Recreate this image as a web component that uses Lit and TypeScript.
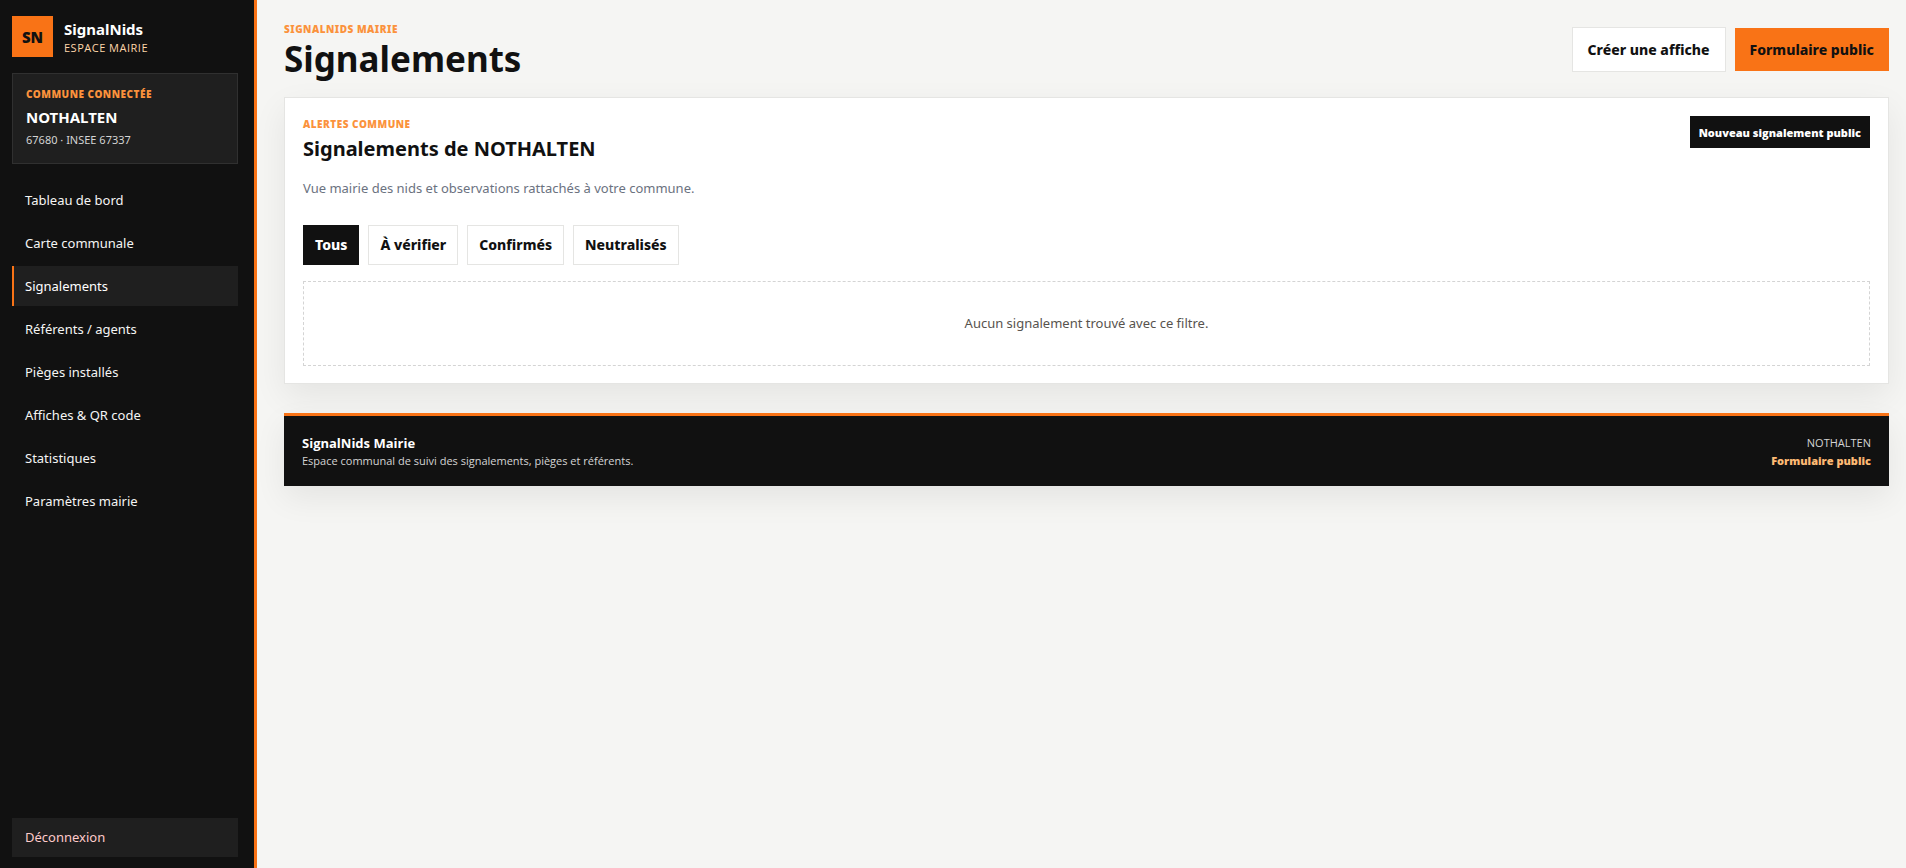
import { LitElement, html, css } from "lit";
import { customElement, state } from "lit/decorators.js";
import { classMap } from "lit/directives/class-map.js";

const NAV = [
  "Tableau de bord",
  "Carte communale",
  "Signalements",
  "Référents / agents",
  "Pièges installés",
  "Affiches & QR code",
  "Statistiques",
  "Paramètres mairie",
];

const FILTERS = ["Tous", "À vérifier", "Confirmés", "Neutralisés"];

@customElement("app-sidebar")
export class AppSidebar extends LitElement {
  static styles = css`
    :host {
      display: flex;
      flex-direction: column;
      box-sizing: border-box;
      padding: 16px 16px 11px 12px;
      background: #111111;
      border-right: 3px solid #f97316;
      color: #ffffff;
    }
    .brand {
      display: flex;
      align-items: center;
      gap: 11px;
      margin-bottom: 16px;
      color: inherit;
      text-decoration: none;
    }
    .logo {
      display: grid;
      place-items: center;
      width: 41px;
      height: 41px;
      background: #f97316;
      color: #111111;
      font-size: 15px;
      font-weight: 900;
    }
    .name {
      display: block;
      padding-top: 2px;
      font-size: 15px;
      line-height: 20px;
      font-weight: 700;
    }
    .space {
      display: block;
      font-size: 11px;
      line-height: 18px;
      letter-spacing: 0.5px;
      text-transform: uppercase;
      color: #fed7aa;
      font-family: "Open Sans", sans-serif;
    }
    .commune {
      padding: 13px;
      margin-bottom: 16px;
      background: #1f1f1f;
      border: 1px solid #303030;
    }
    .label {
      font-size: 10px;
      line-height: 15px;
      font-weight: 900;
      letter-spacing: 0.5px;
      text-transform: uppercase;
      color: #fb923c;
    }
    .town {
      margin-top: 4px;
      font-size: 15px;
      line-height: 22px;
      font-weight: 700;
    }
    .codes {
      margin-top: 2px;
      font-size: 11px;
      line-height: 20px;
      color: #d4d4d4;
    }
    nav {
      display: flex;
      flex-direction: column;
      gap: 3px;
    }
    .item {
      padding: 0 11px;
      border-left: 2px solid transparent;
      font-size: 13px;
      line-height: 40px;
      color: #f5f5f4;
      text-decoration: none;
    }
    .item.active {
      background: #1f1f1f;
      border-left-color: #f97316;
      color: #ffffff;
    }
    .logout {
      margin-top: auto;
      padding: 0 13px;
      border: 0;
      background: #1f1f1f;
      color: #fecaca;
      font: inherit;
      font-size: 13px;
      line-height: 39px;
      text-align: left;
      cursor: pointer;
    }
  `;

  render() {
    return html`
      <a class="brand" href="#">
        <span class="logo">SN</span>
        <span>
          <span class="name">SignalNids</span>
          <span class="space">Espace mairie</span>
        </span>
      </a>
      <section class="commune">
        <div class="label">Commune connectée</div>
        <div class="town">NOTHALTEN</div>
        <div class="codes">67680 · INSEE 67337</div>
      </section>
      <nav>
        ${NAV.map(
          (n) =>
            html`<a href="#" class=${classMap({ item: true, active: n === "Signalements" })}>${n}</a>`
        )}
      </nav>
      <button class="logout" type="button">Déconnexion</button>
    `;
  }
}

@customElement("app-root")
export class AppRoot extends LitElement {
  @state() filter = "Tous";

  static styles = css`
    :host {
      display: grid;
      grid-template-columns: 257px minmax(0, 1fr);
      min-height: 100vh;
      background: #f5f5f3;
      color: #111111;
      font-family: "Noto Sans", "Open Sans", sans-serif;
      font-size: 13px;
    }
    main {
      padding: 21px 17px 24px 27px;
    }
    header {
      display: flex;
      justify-content: space-between;
      align-items: flex-start;
      margin-bottom: 16px;
    }
    .eyebrow {
      margin: 0;
      font-size: 10px;
      line-height: 16px;
      font-weight: 900;
      letter-spacing: 0.5px;
      text-transform: uppercase;
      color: #fb923c;
    }
    h1 {
      margin: 0;
      font-size: 35px;
      line-height: 44px;
      font-weight: 700;
    }
    .actions {
      display: flex;
      align-items: center;
      gap: 9px;
      padding-top: 6px;
    }
    .btn {
      padding: 0 15px;
      font-size: 14px;
      line-height: 43px;
      font-weight: 800;
      color: #111111;
      text-decoration: none;
      white-space: nowrap;
    }
    .primary {
      background: #f97316;
    }
    .outline {
      background: #ffffff;
      border: 1px solid #e5e5e3;
    }
    .card {
      padding: 18px 18px 17px;
      background: #ffffff;
      border: 1px solid #e5e5e3;
      box-shadow: 0 12px 32px rgba(17, 17, 17, 0.07);
    }
    .top {
      display: flex;
      justify-content: space-between;
      align-items: flex-start;
    }
    h2 {
      margin: 0 0 11px;
      font-size: 20px;
      line-height: 34px;
      font-weight: 700;
    }
    .intro {
      margin: 0;
      line-height: 22px;
      color: #6b7280;
    }
    .small {
      padding: 2px 9px 0;
      background: #111111;
      color: #ffffff;
      font-family: "Open Sans", sans-serif;
      font-size: 11px;
      line-height: 30px;
      font-weight: 800;
      text-decoration: none;
      white-space: nowrap;
    }
    .filters {
      display: flex;
      flex-wrap: wrap;
      gap: 9px;
      margin: 26px 0 16px;
    }
    .filter {
      padding: 0 11px;
      border: 1px solid #e5e5e3;
      background: #ffffff;
      color: #111111;
      font: inherit;
      font-size: 14px;
      font-weight: 800;
      line-height: 38px;
      cursor: pointer;
    }
    .filter.active {
      background: #111111;
      border-color: #111111;
      color: #ffffff;
    }
    .empty {
      padding: 31px 16px;
      border: 1px dashed #d4d4d4;
      color: #57534e;
      line-height: 21px;
      text-align: center;
    }
    footer {
      display: flex;
      justify-content: space-between;
      align-items: center;
      margin-top: 29px;
      padding: 18px 18px 16px;
      border-top: 3px solid #f97316;
      background: #111111;
      color: #d4d4d4;
      font-family: "Open Sans", sans-serif;
      font-size: 11px;
      line-height: 18px;
      box-shadow: 0 12px 32px rgba(17, 17, 17, 0.07);
    }
    .signature {
      font-size: 13px;
      color: #ffffff;
      display: block;
    }
    .right {
      display: flex;
      flex-direction: column;
      align-items: flex-end;
    }
    .public {
      color: #fdba74;
      font-weight: 800;
      text-decoration: none;
    }
  `;

  render() {
    return html`
      <app-sidebar></app-sidebar>
      <main>
        <header>
          <div>
            <p class="eyebrow">SignalNids Mairie</p>
            <h1>Signalements</h1>
          </div>
          <div class="actions">
            <a class="btn outline" href="#">Créer une affiche</a>
            <a class="btn primary" href="#">Formulaire public</a>
          </div>
        </header>
        <section class="card">
          <div class="top">
            <div>
              <p class="eyebrow">Alertes commune</p>
              <h2>Signalements de NOTHALTEN</h2>
              <p class="intro">Vue mairie des nids et observations rattachés à votre commune.</p>
            </div>
            <a class="small" href="#">Nouveau signalement public</a>
          </div>
          <div class="filters">
            ${FILTERS.map(
              (f) => html`<button
                type="button"
                class=${classMap({ filter: true, active: f === this.filter })}
                @click=${() => (this.filter = f)}
              >${f}</button>`
            )}
          </div>
          <div class="empty">Aucun signalement trouvé avec ce filtre.</div>
        </section>
        <footer>
          <div>
            <strong class="signature">SignalNids Mairie</strong>
            <span>Espace communal de suivi des signalements, pièges et référents.</span>
          </div>
          <div class="right">
            <span>NOTHALTEN</span>
            <a class="public" href="#">Formulaire public</a>
          </div>
        </footer>
      </main>
    `;
  }
}
